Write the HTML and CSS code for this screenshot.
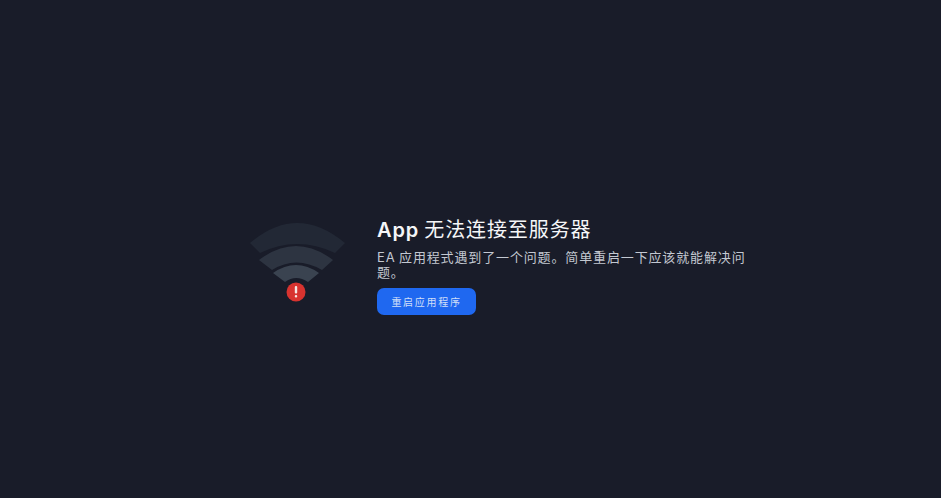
FILE: index.html
```html
<!DOCTYPE html>
<html lang="zh-CN">
<head>
    <meta charset="UTF-8">
    <meta name="viewport" content="width=device-width, initial-scale=1.0">
    <title>App 无法连接至服务器</title>
    <link rel="stylesheet" href="styles.css">
</head>
<body>
    <div class="error-box">
        <svg class="wifi-icon" width="100" height="82" viewBox="0 0 100 82" aria-hidden="true">
            <path class="wave-outer" d="M2 21 Q49 -19 97 21 L87 31 Q49 13 12 31 Z"/>
            <path class="wave-middle" d="M11 38 Q48 10 85 38 L74 48 Q48 33 24 48 Z"/>
            <path class="wave-inner" d="M25 51 Q48 35 71 51 L60 60 Q48 52 37 60 Z"/>
            <circle class="badge" cx="48" cy="70" r="9.5"/>
            <rect class="badge-mark" x="46.8" y="64" width="2.4" height="7.5" rx="1"/>
            <rect class="badge-mark" x="46.8" y="73" width="2.4" height="2.4" rx="1"/>
        </svg>
        <div class="error-text">
            <h1><span class="app-name">App</span> 无法连接至服务器</h1>
            <p>EA 应用程式遇到了一个问题。简单重启一下应该就能解决问题。</p>
            <button type="button">重启应用程序</button>
        </div>
    </div>
</body>
</html>
```

FILE: styles.css
```css
body {
    font-family: Inter, "Noto Sans CJK SC", sans-serif;
    background: #191c29;
    margin: 0;
    padding: 0 0 0 248px;
    height: 498px;
    overflow: hidden;
    display: flex;
    align-items: center;
}
.error-box {
    margin-top: 32px;
    display: flex;
    align-items: center;
    gap: 29px;
}
.wifi-icon {
    flex: none;
    margin-top: -4px;
}
.wave-outer {
    fill: #222835;
}
.wave-middle {
    fill: #2d3441;
}
.wave-inner {
    fill: #3a4350;
}
.badge {
    fill: #d8332f;
}
.badge-mark {
    fill: #f6e6e2;
}
.error-text {
    width: 375px;
}
h1 {
    color: #f5f6f8;
    margin: 0 0 6px 0;
    font-size: 20px;
    font-weight: 400;
    line-height: 28px;
    letter-spacing: 0.9px;
    word-spacing: -1.5px;
}
.app-name {
    font-weight: 600;
}
p {
    color: #c3c8d1;
    margin: 0 0 8px 0;
    font-size: 13px;
    line-height: 15px;
    letter-spacing: 0.86px;
    word-spacing: -1px;
}
button {
    display: block;
    width: 99px;
    height: 27px;
    padding: 0;
    background: #1f68f0;
    color: #cfdff8;
    border: none;
    border-radius: 7px;
    font-family: inherit;
    font-size: 10px;
    letter-spacing: 1.7px;
    cursor: pointer;
}
```
